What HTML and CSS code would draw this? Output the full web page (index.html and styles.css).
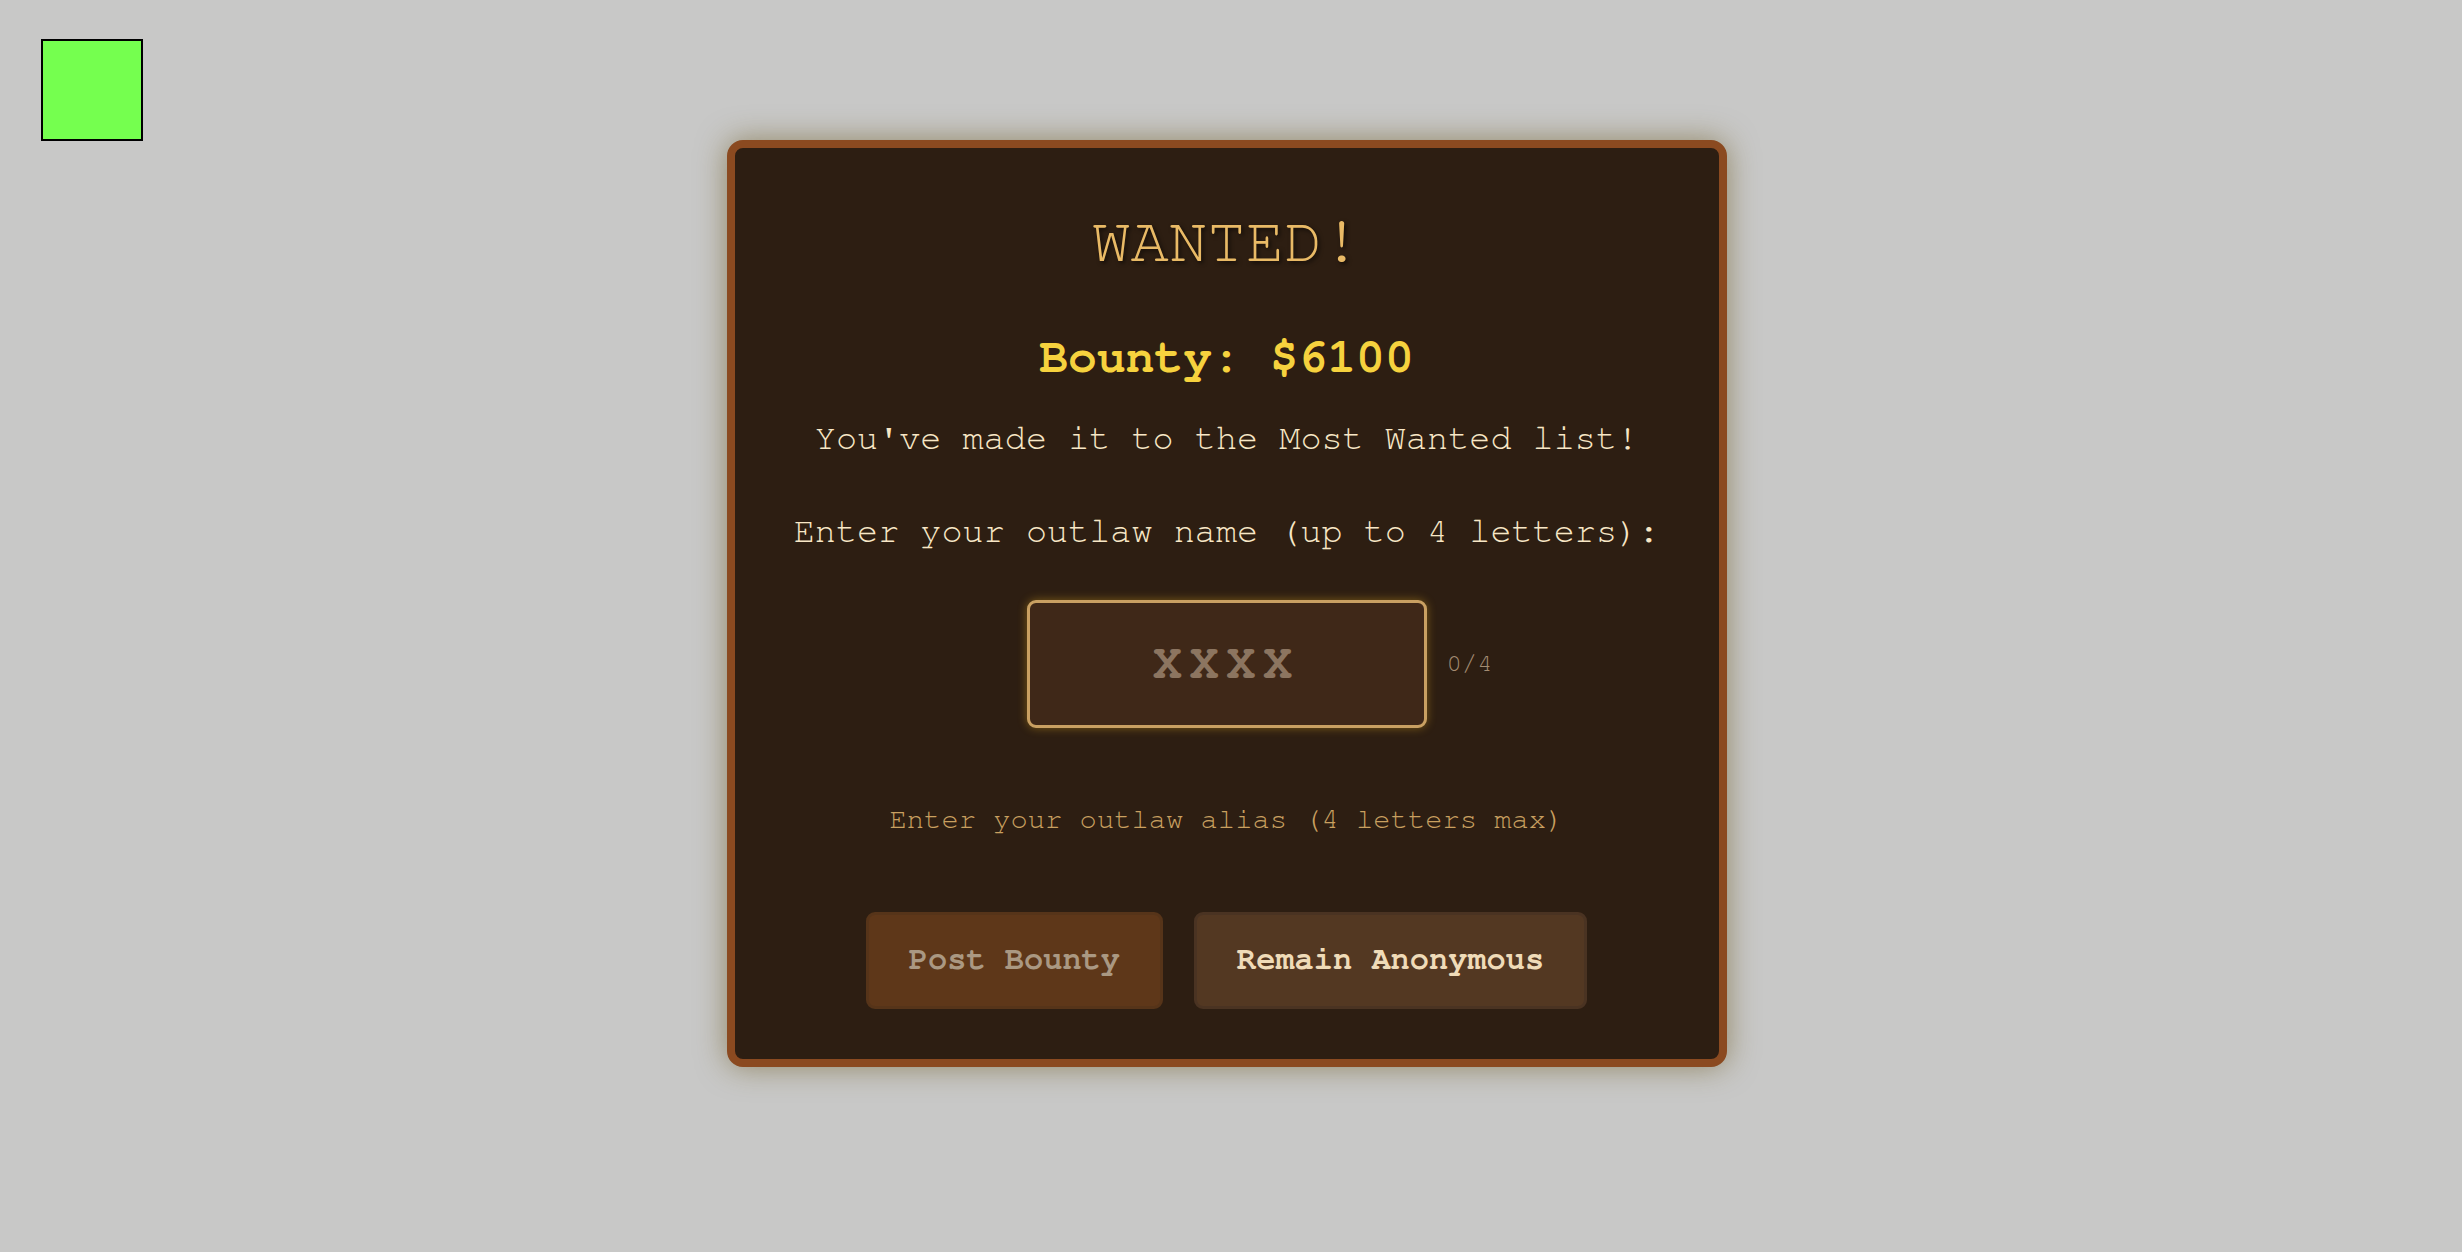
FILE: index.html
```html
<!DOCTYPE html>
<html lang="en">
<head>
<meta charset="utf-8">
<title>Wanted</title>
<link rel="stylesheet" href="styles.css">
</head>
<body>
<div class="marker"></div>
<main class="stage">
  <section class="card">
    <h1 class="title">WANTED!</h1>
    <p class="bounty">Bounty: $6100</p>
    <p class="message">You've made it to the Most Wanted list!</p>
    <p class="prompt">Enter your outlaw name (up to 4 letters):</p>
    <div class="input-row">
      <input class="name-input" type="text" maxlength="4" placeholder="XXXX">
      <span class="counter">0/4</span>
    </div>
    <p class="hint">Enter your outlaw alias (4 letters max)</p>
    <div class="actions">
      <button class="btn btn-post" disabled>Post Bounty</button>
      <button class="btn btn-anon">Remain Anonymous</button>
    </div>
  </section>
</main>
</body>
</html>
```

FILE: styles.css
```css
html, body {
  margin: 0;
  padding: 0;
}

html {
  background: #c8c8c7;
}

body {
  background: #c8c8c7;
  font-family: "Nimbus Mono PS", "Nimbus Mono L", FreeMono, "Courier New", Courier, "Liberation Mono", monospace;
}

.marker {
  position: absolute;
  left: 41px;
  top: 39px;
  width: 98px;
  height: 98px;
  background: #75ff4f;
  border: 2px solid #000;
}

.stage {
  box-sizing: border-box;
  height: 1252px;
  display: flex;
  justify-content: center;
  align-items: flex-start;
  padding-top: 140px;
  padding-right: 9px;
}

.card {
  box-sizing: border-box;
  width: 1000px;
  background: #2d1e12;
  border: 8px solid #8b4a20;
  border-radius: 16px;
  padding: 48px 48px 50px;
  box-shadow: 0 0 30px rgba(100, 80, 20, 0.55);
  display: flex;
  flex-direction: column;
  align-items: center;
  text-align: center;
}

.title,
.bounty,
.message,
.prompt,
.hint {
  margin: 0;
  line-height: 1.2;
}

.title {
  margin-top: 8px;
  font-size: 64px;
  font-weight: normal;
  color: #e9ba66;
  text-shadow: 2px 2px 4px rgba(0, 0, 0, 0.6);
}

.bounty {
  margin-top: 49px;
  font-size: 48px;
  font-weight: bold;
  color: #f6d23e;
}

.message {
  margin-top: 31px;
  font-size: 35.2px;
  color: #f8e7c6;
}

.prompt {
  margin-top: 50px;
  font-size: 35.2px;
  color: #f8e7c6;
}

.input-row {
  margin-top: 47px;
  display: flex;
  align-items: center;
  gap: 20px;
  padding-left: 62px;
}

.name-input {
  box-sizing: border-box;
  width: 400px;
  height: 128px;
  background: #3f2818;
  border: 3px solid #c9a062;
  border-radius: 9px;
  box-shadow: 0 0 10px rgba(218, 165, 32, 0.45);
  font-family: inherit;
  font-size: 48px;
  font-weight: bold;
  letter-spacing: 8px;
  text-align: center;
  color: #f5deb3;
  outline: none;
  padding: 0;
}

.name-input::placeholder {
  color: #8c7560;
  opacity: 1;
}

.counter {
  width: 42px;
  font-size: 25.6px;
  color: #a38c72;
  text-align: left;
}

.hint {
  margin-top: 75px;
  font-size: 28.8px;
  color: #c9a060;
}

.actions {
  margin-top: 75px;
  display: flex;
  gap: 31px;
}

.btn {
  font-family: inherit;
  font-size: 32px;
  font-weight: bold;
  line-height: 38.4px;
  padding: 24.5px 40px 27.6px;
  border-radius: 9px;
  border: 3px solid;
  cursor: pointer;
}

.btn-post {
  background: #5e3719;
  border-color: #563419;
  color: #aa9882;
}

.btn-anon {
  background: #533822;
  border-color: #4a3322;
  color: #efdbb8;
}
```
